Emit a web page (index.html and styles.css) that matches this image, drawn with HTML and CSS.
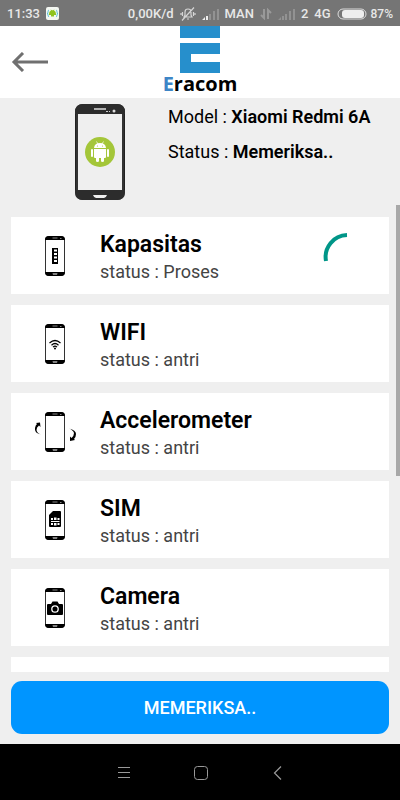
FILE: index.html
```html
<!DOCTYPE html>
<html lang="id">
<head>
    <meta charset="UTF-8">
    <meta name="viewport" content="width=device-width, initial-scale=1.0">
    <title>Eracom</title>
    <link rel="stylesheet" href="styles.css">
</head>
<body>
    <!-- Shared phone outline -->
    <svg class="defs" width="0" height="0" aria-hidden="true">
        <symbol id="phone" viewBox="0 0 20 40">
            <rect x="0.5" y="0.5" width="19" height="39" rx="3" fill="#fff" stroke="#333"/>
            <path d="M0 4V3.500Q0 0 4 0H16Q20 0 20 4Z" fill="#000"/>
            <path d="M0 36H20Q20 40 16 40H4Q0 40 0 36Z" fill="#000"/>
            <path d="M7.500 2H12.500M15 2.500H16.500" stroke="#aaa" stroke-width="0.800"/>
            <path d="M7.500 37.500H12.500L12 38.500H8Z" fill="#fff"/>
        </symbol>
    </svg>

    <div class="status-bar">
        <div class="status-left">
            <span>11:33</span>
            <svg width="13" height="13" viewBox="0 0 13 13">
                <rect width="13" height="13" rx="2" fill="#f4f7f2"/>
                <path d="M3 7Q3 4 5 3.500L4.500 2.500L6 3.200H7L8.500 2.500L8 3.500Q10 4 10 7V8H8V9.500H5V8H3Z" fill="#8fc31f"/>
                <path d="M3 3Q2 3 2 5T1 6.500Q2 6.500 2 8T3 10M10 3Q11 3 11 5T12 6.500Q11 6.500 11 8T10 10" fill="none" stroke="#39b6d0" stroke-width="0.800"/>
            </svg>
        </div>
        <div class="status-right">
            <span>0,00K/d</span>
            <svg class="mute" width="16" height="14" viewBox="0 0 16 14" fill="none" stroke="#d4d4d4">
                <path d="M4 10H12L11 8V5Q11 2 8 2T5 5V8ZM7 12H9M2.500 5V9M1 6V8M13.500 5V9M15 6V8M14 0.500L2 13.500" stroke-width="1.200"/>
            </svg>
            <svg class="signal" width="17" height="12" viewBox="0 0 17 12">
                <path d="M0 12L3 9V12ZM4 8H6V12H4Z" fill="#eee"/>
                <path d="M7 6H9V12H7ZM11 3H13V12H11ZM15 1H17V12H15Z" fill="#929292"/>
            </svg>
            <span>MAN</span>
            <svg class="data" width="12" height="12" viewBox="0 0 12 12" fill="none" stroke="#999" stroke-width="2">
                <path d="M4 1V10L1 7M8 11V2L11 5"/>
            </svg>
            <svg class="signal" width="17" height="12" viewBox="0 0 17 12">
                <path d="M0 12L3 9V12ZM4 8H6V12H4ZM7 6H9V12H7ZM11 3H13V12H11ZM15 1H17V12H15Z" fill="#929292"/>
            </svg>
            <span>2</span>
            <span>4G</span>
            <div class="battery">
                <svg width="30" height="12" viewBox="0 0 30 12">
                    <rect x="1" y="1" width="28" height="10" rx="5" fill="none" stroke="#ddd"/>
                    <rect x="5" y="2" width="22" height="8" rx="3" fill="#eee"/>
                </svg>
                <span>87%</span>
            </div>
        </div>
    </div>

    <header class="app-bar">
        <button class="back-button" aria-label="Kembali">
            <svg width="38" height="20" viewBox="0 0 38 20" fill="none" stroke="#707070" stroke-width="3">
                <path d="M37 10H3M12 1L3 10L12 19"/>
            </svg>
        </button>
        <div class="logo">
            <svg width="40" height="47" viewBox="0 0 40 47">
                <path d="M0 0H40V12H0ZM0 17H40V28H11V36H40V47H0Z" fill="#268fcc"/>
            </svg>
            <div class="logo-text"><span>E</span>racom</div>
        </div>
    </header>

    <section class="device">
        <svg width="50" height="96" viewBox="0 0 50 96">
            <rect x="1" y="1" width="48" height="94" rx="7" fill="#efefef" stroke="#222" stroke-width="2"/>
            <path d="M0 10V8Q0 0 8 0H42Q50 0 50 8V10Z" fill="#2c2c2c"/>
            <path d="M0 86H50V88Q50 96 42 96H8Q0 96 0 88Z" fill="#2c2c2c"/>
            <path d="M2 10V86M48 10V86" stroke="#333" stroke-width="2"/>
            <path d="M19 5H31" stroke="#ddd" stroke-width="1.500"/>
            <path d="M31 7.500H33M34 7.500H35" stroke="#ccc"/>
            <circle cx="39" cy="7" r="1.500" fill="#ddd"/>
            <path d="M18 91H32Q31 94 29 94H21Q19 94 18 91Z" fill="#eee"/>
            <circle cx="25" cy="48" r="15" fill="#a4c639"/>
            <g fill="#fff">
                <path d="M19 44Q19.500 39 25 39T31 44Z"/>
                <path d="M19 45H31V53Q31 54 30 54H29V57Q29 58 27.500 58T26 57V54H24V57Q24 58 22.500 58T21 57V54H20Q19 54 19 53Z"/>
                <rect x="16" y="45" width="2" height="8" rx="1"/>
                <rect x="32" y="45" width="2" height="8" rx="1"/>
            </g>
            <path d="M21.500 37.500L23 40M28.500 37.500L27 40" stroke="#fff" stroke-width="0.700"/>
            <circle cx="22.500" cy="42" r="0.600" fill="#a4c639"/>
            <circle cx="27.500" cy="42" r="0.600" fill="#a4c639"/>
        </svg>
        <div class="device-info">
            <p>Model : <b>Xiaomi Redmi 6A</b></p>
            <p>Status : <b>Memeriksa..</b></p>
        </div>
    </section>

    <main class="test-list">
        <div class="test-card">
            <svg class="test-icon" viewBox="0 0 44 40">
                <use href="#phone" x="12" y="0" width="20" height="40"/>
                <path d="M19 12H25V28H19Z" fill="#000"/>
                <path d="M21 13.500H24V15.500H21ZM21 17H24V19H21ZM21 20.500H24V22.500H21ZM21 24H24V26H21Z" fill="#fff"/>
            </svg>
            <div class="test-text">
                <h2>Kapasitas</h2>
                <p>status : Proses</p>
            </div>
            <svg class="spinner" width="48" height="48" viewBox="0 0 48 48" fill="none" stroke="#009688" stroke-width="4">
                <path d="M3 29A22 22 0 0 1 24 3"/>
            </svg>
        </div>
        <div class="test-card">
            <svg class="test-icon" viewBox="0 0 44 40">
                <use href="#phone" x="12" y="0" width="20" height="40"/>
                <path d="M16.500 19Q22 14 27.500 19M18.500 21.200Q22 17.800 25.500 21.200M20 23.200Q22 21.200 24 23.200" fill="none" stroke="#000" stroke-width="1.200"/>
                <circle cx="22" cy="24.500" r="1" fill="#000"/>
            </svg>
            <div class="test-text">
                <h2>WIFI</h2>
                <p>status : antri</p>
            </div>
        </div>
        <div class="test-card">
            <svg class="test-icon" viewBox="0 0 44 40">
                <use href="#phone" x="12" y="0" width="20" height="40"/>
                <path d="M8 22.500Q1 21 2 16Q2.500 13 4 12L3 11L7 10.500L7.500 15L6 13.500Q3.500 15 3.500 18Q4 21 8 22.500Z" fill="#000"/>
                <path d="M36 16.500Q43 18 43 22Q43 25 41 27L42 28L37 29L37 24.500L38.500 26Q41 24 41 21Q40 18 36 16.500Z" fill="#000"/>
            </svg>
            <div class="test-text">
                <h2>Accelerometer</h2>
                <p>status : antri</p>
            </div>
        </div>
        <div class="test-card">
            <svg class="test-icon" viewBox="0 0 44 40">
                <use href="#phone" x="12" y="0" width="20" height="40"/>
                <path d="M20 11H27Q28 11 28 12V26Q28 27 27 27H17Q16 27 16 26V15Z" fill="#000"/>
                <path d="M18 18H20V20H18ZM21 17.500H23.500V20H21ZM24.500 18H26.500V20H24.500ZM18 21H26.500V22H18ZM18 23H20V25H18ZM21 23H23.500V25.500H21ZM24.500 23H26.500V25H24.500Z" fill="#fff"/>
            </svg>
            <div class="test-text">
                <h2>SIM</h2>
                <p>status : antri</p>
            </div>
        </div>
        <div class="test-card">
            <svg class="test-icon" viewBox="0 0 44 40">
                <use href="#phone" x="12" y="0" width="20" height="40"/>
                <path d="M15 16H18L19.500 13.500H24.500L26 16H29Q30 16 30 17V26Q30 27 29 27H15Q14 27 14 26V17Q14 16 15 16Z" fill="#000"/>
                <circle cx="22" cy="21" r="3.200" fill="none" stroke="#fff" stroke-width="1.300"/>
            </svg>
            <div class="test-text">
                <h2>Camera</h2>
                <p>status : antri</p>
            </div>
        </div>
        <div class="test-card"></div>
        <div class="scroll-thumb"></div>
    </main>

    <div class="action">
        <button class="check-button">MEMERIKSA..</button>
    </div>

    <nav class="nav-bar">
        <button aria-label="Menu">
            <svg width="16" height="16" viewBox="0 0 16 16" fill="none" stroke="#999">
                <path d="M2 2.500H14M2 7.500H14M2 12.500H14"/>
            </svg>
        </button>
        <button aria-label="Beranda">
            <svg width="16" height="16" viewBox="0 0 16 16" fill="none" stroke="#999">
                <rect x="1.500" y="1.500" width="13" height="13" rx="3"/>
            </svg>
        </button>
        <button aria-label="Kembali">
            <svg width="16" height="16" viewBox="0 0 16 16" fill="none" stroke="#999" stroke-width="1.200">
                <path d="M11 1.500L4.500 8L11 14.500"/>
            </svg>
        </button>
    </nav>
</body>
</html>
```

FILE: styles.css
```css
* {
    box-sizing: border-box;
}
body {
    font-family: Roboto, sans-serif;
    margin: 0;
    display: flex;
    flex-direction: column;
    height: 100vh;
    background: #efefef;
    color: #000;
    overflow: hidden;
}
h2, p {
    margin: 0;
}
svg {
    display: block;
    flex: none;
}
button {
    font-family: inherit;
    border: none;
    padding: 0;
    cursor: pointer;
}
.defs {
    position: absolute;
}

/* Status bar */
.status-bar {
    display: flex;
    justify-content: space-between;
    flex: none;
    height: 26px;
    padding: 1px 7px 0;
    background: #757575;
    color: #e8e8e8;
    font-size: 13px;
    font-weight: 500;
}
.status-left, .status-right {
    display: flex;
    align-items: center;
    gap: 6px;
}
.battery {
    display: flex;
    align-items: center;
    gap: 4px;
    font-size: 12px;
}

/* App bar */
.app-bar {
    display: grid;
    grid-template-columns: 1fr auto 1fr;
    align-items: start;
    flex: none;
    height: 72px;
    padding: 0 11px;
    background: #fff;
}
.back-button {
    align-self: center;
    justify-self: start;
    background: none;
}
.logo {
    display: flex;
    flex-direction: column;
    align-items: center;
}
.logo-text {
    font-family: "Open Sans", sans-serif;
    font-size: 20px;
    font-weight: 700;
    line-height: 22px;
}
.logo-text span {
    color: #3d85c6;
}

/* Device summary */
.device {
    display: flex;
    flex: none;
    gap: 43px;
    height: 107px;
    padding: 6px 0 0 75px;
}
.device-info {
    display: flex;
    flex-direction: column;
    gap: 9px;
    font-size: 18px;
    line-height: 26px;
    white-space: nowrap;
}
.device-info b {
    font-weight: 600;
}

/* Test list */
.test-list {
    position: relative;
    display: flex;
    flex-direction: column;
    flex: 1;
    gap: 11px;
    min-height: 0;
    padding: 12px 11px 0;
    overflow: hidden;
}
.test-card {
    display: flex;
    align-items: center;
    flex: none;
    height: 77px;
    padding: 0 18px 0 22px;
    background: #fff;
}
.test-icon {
    width: 44px;
    height: 40px;
}
.test-text {
    flex: 1;
    margin-left: 23px;
    padding-top: 5px;
}
.test-text h2 {
    font-size: 23px;
    font-weight: 600;
    line-height: 28px;
}
.test-text p {
    font-size: 18px;
    line-height: 26px;
    color: #444;
}
.scroll-thumb {
    position: absolute;
    top: 0;
    right: 0;
    width: 4px;
    height: 58%;
    background: #a8a8a8;
}

/* Bottom button */
.action {
    flex: none;
    padding: 9px 11px 10px;
}
.check-button {
    display: block;
    width: 100%;
    height: 53px;
    border-radius: 11px;
    background: #0095ff;
    color: #fff;
    font-size: 18px;
    font-weight: 500;
}

/* System navigation */
.nav-bar {
    display: flex;
    justify-content: center;
    align-items: center;
    flex: none;
    gap: 61px;
    height: 56px;
    padding: 2px 0 0 2px;
    background: #000;
}
.nav-bar button {
    background: none;
}
```
